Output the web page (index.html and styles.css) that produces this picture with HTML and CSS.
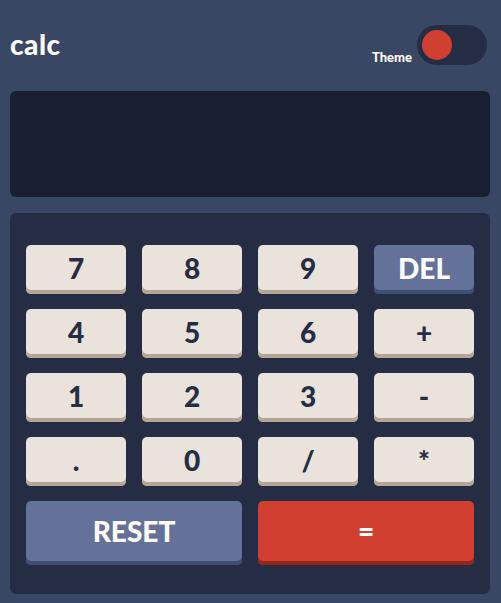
FILE: index.html
```html
<!DOCTYPE html>
<html lang="en">
<head>
<meta charset="utf-8">
<title>calc</title>
<link rel="stylesheet" href="styles.css">
</head>
<body>
<div class="app">
  <header class="header">
    <h1 class="logo">calc</h1>
    <div class="theme">
      <span class="theme-label">Theme</span>
      <div class="toggle"><span class="knob"></span></div>
    </div>
  </header>
  <div class="screen"></div>
  <div class="keypad">
    <button class="key">7</button>
    <button class="key">8</button>
    <button class="key">9</button>
    <button class="key key-blue">DEL</button>
    <button class="key">4</button>
    <button class="key">5</button>
    <button class="key">6</button>
    <button class="key">+</button>
    <button class="key">1</button>
    <button class="key">2</button>
    <button class="key">3</button>
    <button class="key">-</button>
    <button class="key">.</button>
    <button class="key">0</button>
    <button class="key">/</button>
    <button class="key">*</button>
    <button class="key key-blue key-wide">RESET</button>
    <button class="key key-red key-wide">=</button>
  </div>
</div>
</body>
</html>
```
FILE: styles.css
```css
* { box-sizing: border-box; }
html, body { margin: 0; padding: 0; }
body {
  background: #3a4764;
  font-family: "Lato", "Liberation Sans", sans-serif;
  font-weight: 700;
}
.app {
  width: 480px;
  margin-left: 10px;
}
.header {
  display: flex;
  justify-content: space-between;
  align-items: flex-end;
  padding-top: 25px;
  height: 65px;
}
.logo {
  margin: 0;
  align-self: flex-start;
  margin-top: 2px;
  color: #ffffff;
  font-size: 28px;
  font-weight: 900;
  line-height: 34px;
  letter-spacing: 0.5px;
}
.theme {
  display: flex;
  align-items: flex-end;
  gap: 5px;
  margin-right: 3px;
}
.theme-label {
  color: #ffffff;
  font-size: 13px;
  font-weight: 900;
  line-height: 13px;
  margin-bottom: 1px;
}
.toggle {
  width: 70px;
  height: 40px;
  border-radius: 20px;
  background: #252d44;
  padding: 5px;
}
.knob {
  display: block;
  width: 30px;
  height: 30px;
  border-radius: 50%;
  background: #d03f2f;
}
.screen {
  margin-top: 26px;
  height: 106px;
  border-radius: 6px;
  background: #181f33;
}
.keypad {
  margin-top: 16px;
  background: #252d44;
  border-radius: 6px;
  padding: 32px 16px 29px;
  display: grid;
  grid-template-columns: repeat(4, 100px);
  grid-template-rows: repeat(4, 49px) 64px;
  column-gap: 16px;
  row-gap: 15px;
}
.key {
  border: none;
  margin: 0;
  padding: 0 0 4px;
  border-radius: 5px;
  background: #eae3dc;
  box-shadow: inset 0 -4px 0 #b4a597;
  color: #252d44;
  font-family: inherit;
  font-weight: 900;
  font-size: 28px;
  line-height: 1;
}
.key-blue {
  background: #647198;
  box-shadow: inset 0 -4px 0 #414e73;
  color: #ffffff;
}
.key-red {
  background: #d03f2f;
  box-shadow: inset 0 -4px 0 #93261a;
  color: #ffffff;
}
.key-wide {
  grid-column: span 2;
}
```
